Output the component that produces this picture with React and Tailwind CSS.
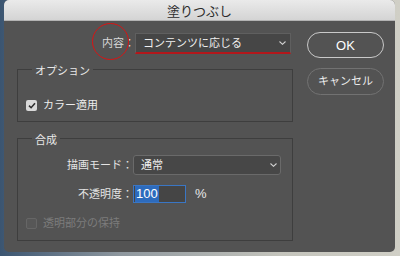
export default function App() {
  const chevron = (
    <svg width="7" height="4" viewBox="0 0 7 4" fill="none">
      <path d="M0.5 0.5 L3.5 3.3 L6.5 0.5" stroke="#cfcfcf" strokeWidth="1.1" />
    </svg>
  );
  return (
    <div className="relative w-[400px] h-[256px] overflow-hidden bg-[linear-gradient(to_right,#3b5571_0%,#8e979e_30%,#c4c4bc_70%,#d0cfc6_100%)] font-['Liberation_Sans','Noto_Sans_CJK_JP',sans-serif]">
      <div className="ml-[4px] w-[391px] h-[252px] bg-[#535353] rounded-[5px] flex flex-col overflow-hidden">
        <div className="h-[21px] shrink-0 bg-[linear-gradient(#eaeaea,#d4d4d4)] border-b border-[#b3b3b3] flex items-center justify-center pt-[2px] text-[13px] leading-none text-[#2b2b2b]">
          塗りつぶし
        </div>
        <div className="flex pl-[13px]">
          <div className="w-[276px] flex flex-col pt-[12px]">
            <div className="flex items-center h-[20px]">
              <div className="w-[118px] text-right text-[11px] leading-[14px] text-[#d8d8d8]">内容：</div>
              <div className="w-[156px] h-[21px] flex items-center justify-between bg-[#464646] border border-[#5f5f5f] border-b-2 border-b-[#b3171b] pl-[7px] pr-[4px]">
                <span className="text-[11px] leading-[14px] text-[#f0f0f0]">コンテンツに応じる</span>
                {chevron}
              </div>
            </div>

            <fieldset className="mt-[7px] border border-[#3e3e3e] px-[8px] pt-[20px] pb-[9px]">
              <legend className="ml-[6px] px-[3px] pt-[4px] text-[11px] leading-[14px] text-[#e8e8e8]">オプション</legend>
              <div className="flex items-center h-[14px] gap-[6px]">
                <div className="w-[11px] h-[11px] rounded-[2px] bg-[#d9d9d9] flex items-center justify-center">
                  <svg width="8" height="7" viewBox="0 0 8 7" fill="none">
                    <path d="M1 3.6 L3.1 5.7 L7 1.2" stroke="#2e2e2e" strokeWidth="1.6" />
                  </svg>
                </div>
                <span className="text-[11px] leading-[14px] text-[#ececec]">カラー適用</span>
              </div>
            </fieldset>

            <fieldset className="mt-[7px] border border-[#3e3e3e] px-[0px] pt-[8px] pb-[10px]">
              <legend className="ml-[14px] px-[3px] pt-[4px] text-[11px] leading-[14px] text-[#e8e8e8]">合成</legend>
              <div className="flex items-center h-[20px]">
                <div className="w-[115px] text-right text-[11px] leading-[14px] text-[#e4e4e4]">描画モード：</div>
                <div className="w-[148px] h-[20px] flex items-center justify-between bg-[#474747] border border-[#6a6a6a] rounded-[3px] pl-[7px] pr-[3px]">
                  <span className="text-[11px] leading-[14px] text-[#f0f0f0]">通常</span>
                  {chevron}
                </div>
              </div>
              <div className="flex items-center h-[18px] mt-[10px]">
                <div className="w-[115px] text-right text-[11px] leading-[14px] text-[#e4e4e4]">不透明度：</div>
                <div className="w-[53px] h-[18px] flex items-center bg-[#454545] border border-[#3a76c4] pl-[1px]">
                  <span className="bg-[#2d6bbd] text-white text-[13px] leading-[16px] px-[1px]">100</span>
                </div>
                <span className="ml-[9px] text-[13px] leading-[16px] text-[#e8e8e8]">%</span>
              </div>
              <div className="flex items-center h-[14px] gap-[6px] mt-[13px] pl-[8px]">
                <div className="w-[11px] h-[11px] rounded-[2px] border border-[#666666] bg-[#575757]" />
                <span className="text-[11px] leading-[14px] text-[#7c7c7c]">透明部分の保持</span>
              </div>
            </fieldset>
          </div>

          <div className="ml-[14px] pt-[11px] flex flex-col">
            <div className="w-[77px] h-[26px] rounded-full border-[1.5px] border-[#c9c9c9] flex items-center justify-center text-[13px] leading-none text-white">
              OK
            </div>
            <div className="mt-[10px] w-[77px] h-[27px] rounded-full border border-[#727272] flex items-center justify-center text-[11px] leading-none text-[#ececec]">
              キャンセル
            </div>
          </div>
        </div>
      </div>
      <div className="absolute left-[92px] top-[23px] w-[37px] h-[37px] rounded-full border-[1.5px] border-[#d81414]" />
    </div>
  );
}
